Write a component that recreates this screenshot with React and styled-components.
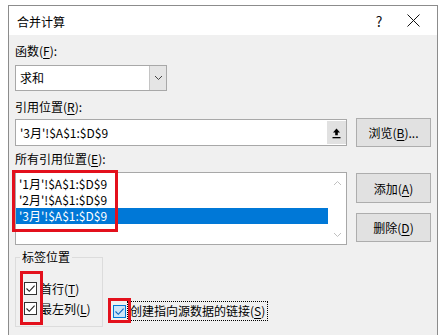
import React from "react";
import styled, { createGlobalStyle } from "styled-components";

const GlobalStyle = createGlobalStyle`
  body {
    margin: 0;
    background: #ffffff;
    font-family: "Noto Sans CJK SC", "Microsoft YaHei", sans-serif;
    font-size: 12px;
    color: #000;
  }
`;

const RED = "#e3101c";

// window frame
const Dialog = styled.div`
  margin: 5px 0 0 8px;
  width: 428px;
  height: 340px;
  border: 1px solid #8c8c8c;
  border-bottom: none;
  background: #f0f0f0;
  display: flex;
  flex-direction: column;
`;

const TitleBar = styled.div`
  height: 29px;
  background: #fff;
  display: flex;
  align-items: center;
  padding-left: 8px;
`;

const Title = styled.div`
  flex: 1;
  font-size: 12px;
  padding-top: 1px;
`;

const TitleButton = styled.div`
  width: ${(p) => p.w}px;
  display: flex;
  align-items: center;
  justify-content: center;
  font-size: 14px;
  color: #111;
`;

const Body = styled.div`
  padding: 8px 5px 0 6px;
  display: flex;
  flex-direction: column;
`;

const Label = styled.div`
  height: 16px;
  line-height: 16px;
  margin-top: ${(p) => p.mt || 0}px;
`;

const U = styled.span`
  text-decoration: underline;
  text-underline-offset: 2px;
`;

const Select = styled.div`
  margin-top: 6px;
  width: 150px;
  height: 24px;
  border: 1px solid #a8a8a8;
  background: #fff;
  display: flex;
  align-items: stretch;
`;

const SelectText = styled.div`
  flex: 1;
  padding-left: 4px;
  line-height: 24px;
`;

const DropBtn = styled.div`
  width: 16px;
  background: #e5e5e5;
  border-left: 1px solid #c4c4c4;
  display: flex;
  align-items: center;
  justify-content: center;
`;

const Row = styled.div`
  display: flex;
  align-items: ${(p) => p.align || "center"};
  gap: 9px;
  margin-top: ${(p) => p.mt || 0}px;
`;

const RefInput = styled.div`
  width: 330px;
  height: 25px;
  border: 1px solid #a8a8a8;
  background: #fff;
  display: flex;
  align-items: stretch;
`;

const InputText = styled.div`
  flex: 1;
  padding-left: 4px;
  line-height: 25px;
`;

const CollapseBtn = styled.div`
  width: 19px;
  margin: 1px 0;
  background: #e1e1e1;
  display: flex;
  align-items: center;
  justify-content: center;
`;

const Button = styled.div`
  width: 73px;
  height: ${(p) => p.h || 27}px;
  border: 1px solid #adadad;
  background: #e1e1e1;
  display: flex;
  align-items: center;
  justify-content: center;
`;

const ButtonCol = styled.div`
  display: flex;
  flex-direction: column;
  gap: 10px;
  padding-top: 1px;
`;

const ListBox = styled.div`
  position: relative;
  width: 330px;
  height: 71px;
  border: 1px solid #a8a8a8;
  background: #fff;
  display: flex;
`;

const Items = styled.div`
  flex: 1;
  padding-top: 3px;
`;

const Item = styled.div`
  height: 16px;
  line-height: 16px;
  padding-left: 3px;
  background: ${(p) => (p.selected ? "#0078d7" : "transparent")};
  color: ${(p) => (p.selected ? "#fff" : "#000")};
`;

const ScrollBar = styled.div`
  width: 18px;
  display: flex;
  flex-direction: column;
  justify-content: space-between;
  align-items: center;
  padding: 7px 0 6px;
`;

const Mark = styled.div`
  position: absolute;
  left: ${(p) => p.x}px;
  top: ${(p) => p.y}px;
  width: ${(p) => p.w}px;
  height: ${(p) => p.h}px;
  border: 3px solid ${RED};
  box-sizing: border-box;
  pointer-events: none;
`;

const Bottom = styled.div`
  display: flex;
  align-items: flex-end;
  margin-top: 12px;
`;

const GroupBox = styled.div`
  position: relative;
  width: 88px;
  height: 70px;
  border: 1px solid #dcdcdc;
  box-sizing: border-box;
  display: flex;
  flex-direction: column;
  padding-left: 8px;
`;

const Legend = styled.div`
  align-self: flex-start;
  margin: -9px 0 16px -4px;
  padding: 0 2px;
  background: #f0f0f0;
  line-height: 16px;
`;

const CheckRow = styled.div`
  display: flex;
  align-items: center;
  gap: 3px;
  height: 14px;
  margin-bottom: 6px;
`;

const Box = styled.div`
  width: 11px;
  height: 11px;
  border: 1px solid ${(p) => (p.focus ? "#0078d7" : "#333")};
  background: ${(p) => (p.focus ? "#cce4f7" : "#fff")};
  display: flex;
  align-items: center;
  justify-content: center;
`;

const LinkWrap = styled.div`
  position: relative;
  display: flex;
  align-items: center;
  gap: 3px;
  margin-left: 10px;
  margin-bottom: 8px;
`;

const Focus = styled.span`
  outline: 1px dotted #000;
  outline-offset: 1px;
  line-height: 16px;
  padding: 0 1px;
`;

const Check = ({ color = "#222" }) => (
  <svg width="11" height="11" viewBox="0 0 11 11">
    <path d="M1.5 5.5 L4.3 8.3 L9.6 2.6" fill="none" stroke={color} strokeWidth="1.1" />
  </svg>
);

const CheckBox = ({ focus }) => (
  <Box focus={focus}>
    <Check color={focus ? "#0a64c2" : "#222"} />
  </Box>
);

const Chevron = ({ up, color = "#555" }) => (
  <svg width="9" height="6" viewBox="0 0 9 6">
    <path d={up ? "M1 5 L4.5 1.5 L8 5" : "M1 1 L4.5 4.5 L8 1"} fill="none" stroke={color} strokeWidth="1" />
  </svg>
);

export default function App() {
  return (
    <>
      <GlobalStyle />
      <Dialog>
        <TitleBar>
          <Title>合并计算</Title>
          <TitleButton w={20}>?</TitleButton>
          <TitleButton w={48}>
            <svg width="13" height="13" viewBox="0 0 13 13">
              <path d="M0.5 0.5 L12.5 12.5 M12.5 0.5 L0.5 12.5" stroke="#111" strokeWidth="1" />
            </svg>
          </TitleButton>
        </TitleBar>
        <Body>
          <Label>
            函数(<U>F</U>):
          </Label>
          <Select>
            <SelectText>求和</SelectText>
            <DropBtn>
              <Chevron color="#444" />
            </DropBtn>
          </Select>
          <Label mt={8}>
            引用位置(<U>R</U>):
          </Label>
          <Row mt={3}>
            <RefInput>
              <InputText>'3月'!$A$1:$D$9</InputText>
              <CollapseBtn>
                <svg width="11" height="12" viewBox="0 0 11 12">
                  <path d="M5.5 1.5 L2 5.5 L4.2 5.5 L4.2 8.3 L6.8 8.3 L6.8 5.5 L9 5.5 Z" fill="#000" />
                  <rect x="1.5" y="10" width="8" height="1.3" fill="#000" />
                </svg>
              </CollapseBtn>
            </RefInput>
            <Button h={27}>
              浏览(<U>B</U>)...
            </Button>
          </Row>
          <Label mt={4}>
            所有引用位置(<U>E</U>):
          </Label>
          <Row mt={5} align="flex-start">
            <ListBox>
              <Items>
                <Item>'1月'!$A$1:$D$9</Item>
                <Item>'2月'!$A$1:$D$9</Item>
                <Item selected>'3月'!$A$1:$D$9</Item>
              </Items>
              <ScrollBar>
                <Chevron up color="#c0c0c0" />
                <Chevron color="#c0c0c0" />
              </ScrollBar>
              <Mark x={-4} y={-3} w={106} h={62} />
            </ListBox>
            <ButtonCol>
              <Button h={28}>
                添加(<U>A</U>)
              </Button>
              <Button h={27}>
                删除(<U>D</U>)
              </Button>
            </ButtonCol>
          </Row>
          <Bottom>
            <GroupBox>
              <Legend>标签位置</Legend>
              <CheckRow>
                <CheckBox />
                <span>
                  首行(<U>T</U>)
                </span>
              </CheckRow>
              <CheckRow>
                <CheckBox />
                <span>
                  最左列(<U>L</U>)
                </span>
              </CheckRow>
              <Mark x={4} y={13} w={23} h={54} />
            </GroupBox>
            <LinkWrap>
              <CheckBox focus />
              <Focus>
                创建指向源数据的链接(<U>S</U>)
              </Focus>
              <Mark x={-5} y={-5} w={23} h={25} />
            </LinkWrap>
          </Bottom>
        </Body>
      </Dialog>
    </>
  );
}
